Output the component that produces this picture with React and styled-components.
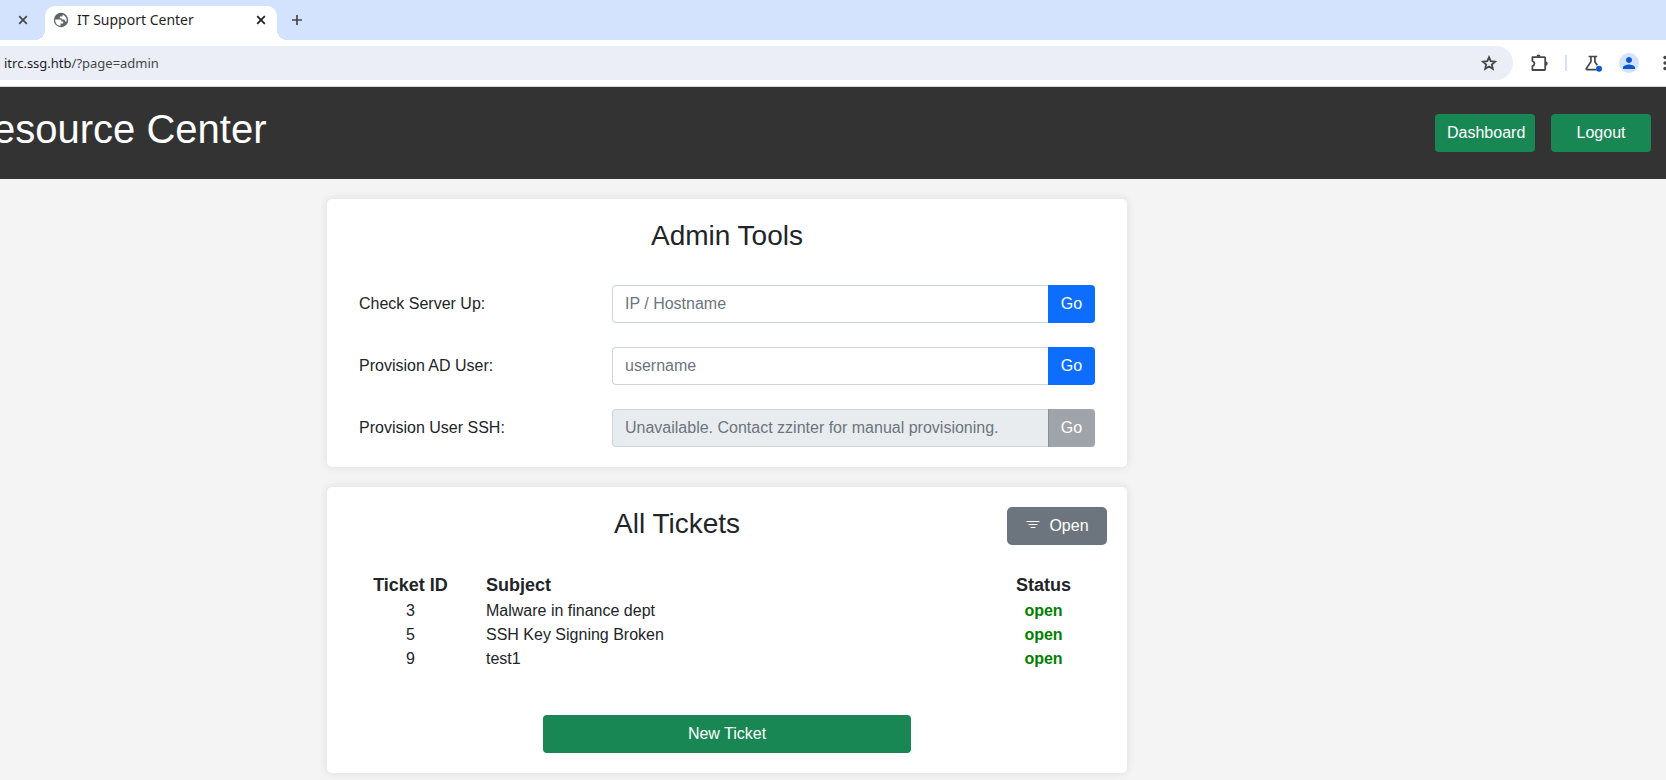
import React from "react";
import styled, { createGlobalStyle } from "styled-components";
import { MdPerson } from "react-icons/md";

const Global = createGlobalStyle`
  *, *::before, *::after { box-sizing: border-box; }
  body {
    margin: 0;
    background: #f4f4f4;
    color: #212529;
    font-family: "Liberation Sans", Arial, sans-serif;
    font-size: 16px;
    line-height: 24px;
    overflow-x: hidden;
  }
  button, input { font: inherit; }
`;

const chromeFont = `"Noto Sans", sans-serif`;

const TabStrip = styled.div`
  display: flex;
  align-items: flex-end;
  height: 40px;
  background: #d3e3fd;
  font-family: ${chromeFont};
`;

const IconButton = styled.button`
  display: flex;
  align-items: center;
  justify-content: center;
  flex: none;
  width: 20px;
  height: 20px;
  padding: 0;
  border: 0;
  border-radius: 50%;
  background: ${(p) => p.$fill || "transparent"};
  color: ${(p) => p.$color || "#474747"};
`;

const PreviousTab = styled.div`
  display: flex;
  align-items: center;
  justify-content: flex-end;
  width: 45px;
  height: 40px;
  padding-right: 12px;
`;

const ActiveTab = styled.div`
  position: relative;
  display: flex;
  align-items: center;
  gap: 8px;
  width: 232px;
  height: 34px;
  padding: 0 6px 6px 8px;
  border-radius: 10px 10px 0 0;
  background: #fff;

  &::before,
  &::after {
    content: "";
    position: absolute;
    bottom: 0;
    width: 10px;
    height: 10px;
  }
  &::before {
    right: 100%;
    background: radial-gradient(circle at 0 0, transparent 10px, #fff 10px);
  }
  &::after {
    left: 100%;
    background: radial-gradient(circle at 100% 0, transparent 10px, #fff 10px);
  }
`;

const TabTitle = styled.span`
  flex: 1;
  color: #1f1f1f;
  font-size: 14px;
  line-height: 20px;
  white-space: nowrap;
`;

const NewTab = styled.div`
  display: flex;
  align-items: center;
  height: 40px;
  padding-left: 10px;
`;

const Toolbar = styled.div`
  display: flex;
  align-items: center;
  height: 47px;
  background: #fff;
  border-bottom: 1px solid #d5d7db;
  overflow: hidden;
`;

const AddressBar = styled.div`
  display: flex;
  align-items: center;
  flex: 1;
  height: 34px;
  padding: 0 14px 0 4px;
  border-radius: 0 17px 17px 0;
  background: #ebeef7;
  color: #474747;
  font-family: ${chromeFont};
  font-size: 13px;
  line-height: 20px;
`;

const Url = styled.span`
  flex: 1;
  b { font-weight: 400; color: #1f1f1f; }
`;

const ToolbarActions = styled.div`
  display: flex;
  align-items: center;
  flex: none;
  gap: 16px;
  width: 153px;
  padding-left: 16px;
`;

const Divider = styled.span`
  flex: none;
  width: 2px;
  height: 16px;
  background: #d3e3fd;
`;

const Header = styled.header`
  display: flex;
  align-items: center;
  justify-content: space-between;
  height: 92px;
  padding-right: 15px;
  background: #333;
  overflow: hidden;
`;

const SiteTitle = styled.h1`
  margin: 0 0 8px -7px;
  color: #fff;
  font-size: 40px;
  font-weight: 400;
  line-height: 48px;
  white-space: nowrap;
`;

const Nav = styled.nav`
  display: flex;
  gap: 16px;
`;

const buttonBase = `
  height: 38px;
  padding: 0 12px;
  border: 0;
  color: #fff;
  line-height: 24px;
  text-align: center;
`;

const NavLink = styled.a`
  ${buttonBase}
  width: 100px;
  padding: 7px 12px;
  border-radius: 4px;
  background: #198754;
  text-decoration: none;
`;

const Main = styled.main`
  display: flex;
  flex-direction: column;
  align-items: center;
  gap: 20px;
  padding: 20px 212px 7px 0;
`;

const Card = styled.section`
  width: 100%;
  max-width: 800px;
  padding: 20px;
  border-radius: 5px;
  background: #fff;
  box-shadow: 0 0 10px rgba(0, 0, 0, 0.1);
`;

const CardHeader = styled.div`
  display: flex;
  align-items: flex-start;
`;

const CardTitle = styled.h2`
  flex: 1;
  margin: 0;
  font-size: 28px;
  font-weight: 400;
  line-height: 34px;
  text-align: center;
`;

const ToolList = styled.div`
  display: flex;
  flex-direction: column;
  gap: 24px;
  padding: 32px 12px 0;
`;

const ToolRow = styled.form`
  display: grid;
  grid-template-columns: 1fr 483px;
  align-items: center;
`;

const InputGroup = styled.div`
  display: flex;
`;

const TextInput = styled.input`
  flex: 1;
  min-width: 0;
  height: 38px;
  padding: 0 12px;
  border: 1px solid #ced4da;
  border-right: 0;
  border-radius: 4px 0 0 4px;
  background: #fff;
  color: #212529;
  &::placeholder { color: #6c757d; opacity: 1; }
  &:disabled { background: #e9ecef; }
`;

const GoButton = styled.button`
  ${buttonBase}
  width: 47px;
  border-radius: 0 4px 4px 0;
  background: #0d6efd;
  &:disabled { background: #9fa4aa; box-shadow: inset 1px 0 #899198; }
`;

const FilterButton = styled.button`
  ${buttonBase}
  display: flex;
  align-items: center;
  justify-content: center;
  gap: 8px;
  width: 100px;
  border-radius: 5px;
  background: #6c757d;
`;

const TicketTable = styled.table`
  width: calc(100% - 24px);
  margin: 27px 12px 0;
  border-collapse: collapse;
  table-layout: fixed;
`;

const HeadCell = styled.th`
  width: ${(p) => p.$width || "auto"};
  padding: 0;
  padding-left: ${(p) => (p.$left ? 24 : 0)}px;
  font-size: 18px;
  line-height: 27px;
  text-align: ${(p) => (p.$left ? "left" : "center")};
`;

const Cell = styled.td`
  padding: 0;
  padding-left: ${(p) => (p.$left ? 24 : 0)}px;
  text-align: ${(p) => (p.$left ? "left" : "center")};
`;

const Status = styled.strong`
  color: #008000;
`;

const NewTicket = styled.button`
  ${buttonBase}
  display: block;
  width: 368px;
  margin: 44px auto 0;
  border-radius: 4px;
  background: #198754;
`;

const CloseIcon = () => (
  <svg width="10" height="10" viewBox="0 0 10 10" fill="none" stroke="currentColor" strokeWidth="1.7" aria-hidden="true">
    <path d="M1.2 1.2l7.6 7.6M8.8 1.2L1.2 8.8" />
  </svg>
);

const GlobeIcon = () => (
  <svg width="16" height="16" viewBox="0 0 16 16" aria-hidden="true">
    <circle cx="8" cy="8" r="7.2" fill="#5f6368" />
    <path fill="#fff" d="M2.2 7.4H6.6Q8.6 7.6 8.6 9.4H10.2V11.4H7.6V13.8Q3 13.6 2.2 9ZM9.6 2.4V3.4Q9.6 4.6 8.2 4.6H6.8V6.2H8.6V7.6H11Q12.2 8 12.2 9.4L13.4 9.8Q14.8 5 9.6 2.4Z" />
  </svg>
);

const PlusIcon = () => (
  <svg width="12" height="12" viewBox="0 0 12 12" stroke="currentColor" strokeWidth="1.7" aria-hidden="true">
    <path d="M6 1v10M1 6h10" />
  </svg>
);

const StarIcon = () => (
  <svg width="20" height="20" viewBox="0 0 20 20" fill="none" stroke="currentColor" strokeWidth="1.8" aria-hidden="true">
    <path d="M10 4.2L11.700 8.200L16.100 8.600L12.800 11.500L13.800 15.800L10 13.500L6.200 15.800L7.200 11.500L3.900 8.600L8.300 8.200Z" />
  </svg>
);

const ExtensionIcon = () => (
  <svg width="20" height="20" viewBox="0 0 20 20" aria-hidden="true">
    <path d="M3.4 4.2H15.4a.8.8 0 0 1 .8.8v11.2a.8.8 0 0 1-.8.8H3.400v-3.800Q5.400 12.400 5.400 10.600T3.400 8Z" fill="none" stroke="#474747" strokeWidth="1.8" strokeLinejoin="round" />
    <path d="M7.400 3.600a2.100 2.100 0 0 1 4.200 0ZM16.600 8.600a2.100 2.100 0 0 1 0 4.200Z" fill="#474747" />
  </svg>
);

const LabsIcon = () => (
  <svg width="20" height="20" viewBox="0 0 20 20" fill="none" aria-hidden="true">
    <path d="M5.600 3.500h8.600M7.900 3.500v5.300L3.400 15.400q-.5 1.200.7 1.200H13M11.900 3.500v5.300l2.400 3.400" stroke="#474747" strokeWidth="1.700" />
    <circle cx="16" cy="15.800" r="3" fill="#0b57d0" />
  </svg>
);

const MenuIcon = () => (
  <svg width="4" height="16" viewBox="0 0 4 16" fill="#474747" aria-hidden="true">
    <circle cx="2" cy="2.500" r="1.700" />
    <circle cx="2" cy="8" r="1.700" />
    <circle cx="2" cy="13.500" r="1.700" />
  </svg>
);

const FilterIcon = () => (
  <svg width="16" height="16" viewBox="0 0 16 16" stroke="currentColor" strokeLinecap="round" aria-hidden="true">
    <path d="M2 3.500h12M4 6.500h8M6 9.500h4" />
  </svg>
);

const tools = [
  { id: "server", label: "Check Server Up:", placeholder: "IP / Hostname" },
  { id: "ad-user", label: "Provision AD User:", placeholder: "username" },
  {
    id: "ssh-user",
    label: "Provision User SSH:",
    placeholder: "Unavailable. Contact zzinter for manual provisioning.",
    disabled: true,
  },
];

const tickets = [
  { id: 3, subject: "Malware in finance dept", status: "open" },
  { id: 5, subject: "SSH Key Signing Broken", status: "open" },
  { id: 9, subject: "test1", status: "open" },
];

export default function App() {
  return (
    <>
      <Global />
      <TabStrip>
        <PreviousTab>
          <IconButton aria-label="Close previous tab"><CloseIcon /></IconButton>
        </PreviousTab>
        <ActiveTab>
          <GlobeIcon />
          <TabTitle>IT Support Center</TabTitle>
          <IconButton aria-label="Close tab" $color="#1f1f1f"><CloseIcon /></IconButton>
        </ActiveTab>
        <NewTab>
          <IconButton aria-label="New tab"><PlusIcon /></IconButton>
        </NewTab>
      </TabStrip>
      <Toolbar>
        <AddressBar>
          <Url><b>itrc.ssg.htb</b>/?page=admin</Url>
          <IconButton aria-label="Bookmark"><StarIcon /></IconButton>
        </AddressBar>
        <ToolbarActions>
          <IconButton aria-label="Extensions"><ExtensionIcon /></IconButton>
          <Divider />
          <IconButton aria-label="Labs"><LabsIcon /></IconButton>
          <IconButton aria-label="Profile" $fill="#d3e3fd" $color="#0b57d0"><MdPerson size={18} /></IconButton>
          <IconButton aria-label="Menu"><MenuIcon /></IconButton>
        </ToolbarActions>
      </Toolbar>
      <Header>
        <SiteTitle>esource Center</SiteTitle>
        <Nav>
          <NavLink href="#dashboard">Dashboard</NavLink>
          <NavLink href="#logout">Logout</NavLink>
        </Nav>
      </Header>
      <Main>
        <Card>
          <CardTitle>Admin Tools</CardTitle>
          <ToolList>
            {tools.map((t) => (
              <ToolRow key={t.id} onSubmit={(e) => e.preventDefault()}>
                <label htmlFor={t.id}>{t.label}</label>
                <InputGroup>
                  <TextInput id={t.id} type="text" placeholder={t.placeholder} disabled={t.disabled} />
                  <GoButton type="submit" disabled={t.disabled}>Go</GoButton>
                </InputGroup>
              </ToolRow>
            ))}
          </ToolList>
        </Card>
        <Card>
          <CardHeader>
            <CardTitle>All Tickets</CardTitle>
            <FilterButton type="button"><FilterIcon />Open</FilterButton>
          </CardHeader>
          <TicketTable>
            <thead>
              <tr>
                <HeadCell $width="103px">Ticket ID</HeadCell>
                <HeadCell $left>Subject</HeadCell>
                <HeadCell $width="103px">Status</HeadCell>
              </tr>
            </thead>
            <tbody>
              {tickets.map((t) => (
                <tr key={t.id}>
                  <Cell>{t.id}</Cell>
                  <Cell $left>{t.subject}</Cell>
                  <Cell><Status>{t.status}</Status></Cell>
                </tr>
              ))}
            </tbody>
          </TicketTable>
          <NewTicket type="button">New Ticket</NewTicket>
        </Card>
      </Main>
    </>
  );
}
